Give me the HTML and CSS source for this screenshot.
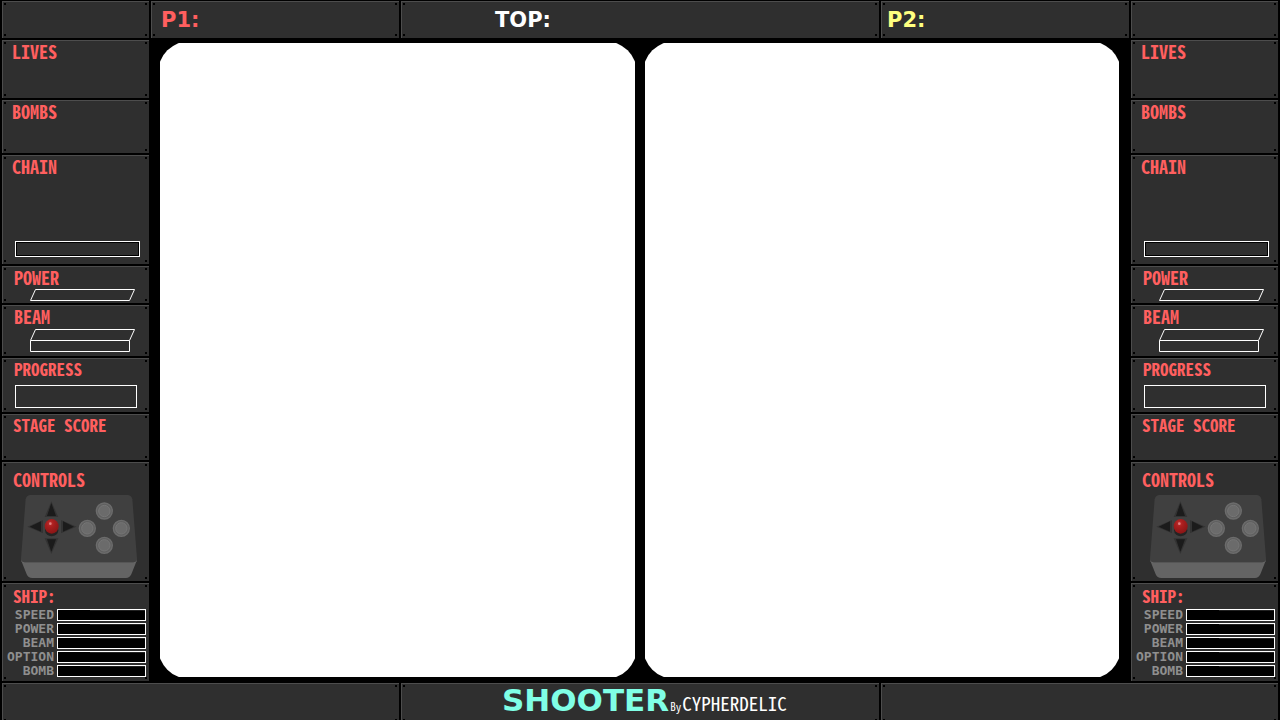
FILE: index.html
```html
<!DOCTYPE html>
<html lang="en">
<head>
<meta charset="utf-8">
<title>Shooter</title>
<link rel="stylesheet" href="styles.css">
</head>
<body>
<svg class="defs" aria-hidden="true">
  <defs>
    <radialGradient id="ball" cx="0.4" cy="0.3" r="0.75">
      <stop offset="0" stop-color="#c02e2e"/><stop offset="0.35" stop-color="#a81e1e"/><stop offset="1" stop-color="#861515"/>
    </radialGradient>
    <symbol id="stick" viewBox="63 269 348 249">
      <path d="M90 269H384Q394 270 397 282L411 460V470H63V460L77 282Q80 270 90 269Z" fill="#404040"/>
      <path d="M63 464Q66 471 74 471H400Q408 471 411 464L394 507Q389 518 378 518H97Q84 518 80 507Z" fill="#646464"/>
      <g fill="#333"><path d="M154 288L175 335H134Z"/><path d="M154 446L175 399H134Z"/><path d="M82 364L129 344V384Z"/><path d="M230 364L183 344V384Z"/></g>
      <g fill="#1b1b1b"><path d="M154 293L168 332H141Z"/><path d="M154 439L168 402H141Z"/><path d="M89 364L123 348V379Z"/><path d="M222 364L189 348V379Z"/></g>
      <ellipse cx="155" cy="375" rx="20" ry="18" fill="#242424"/>
      <ellipse cx="155" cy="363" rx="21" ry="22" fill="url(#ball)"/>
      <circle cx="151" cy="355" r="4" fill="#e08080"/>
      <g fill="#606060" stroke="#6c6c6c" stroke-width="4">
        <circle cx="313" cy="317" r="24"/><circle cx="262" cy="369" r="24"/><circle cx="364" cy="369" r="24"/><circle cx="313" cy="420" r="24"/>
      </g>
      <g fill="#6b6b6b" stroke="#767676" stroke-width="3">
        <circle cx="313" cy="317" r="17"/><circle cx="262" cy="369" r="17"/><circle cx="364" cy="369" r="17"/><circle cx="313" cy="420" r="17"/>
      </g>
    </symbol>
    <symbol id="power" viewBox="0 0 105 12">
      <path d="M5.500 .5H104.500L99.500 11.500H.5Z" fill="none" stroke="#fff"/>
    </symbol>
    <symbol id="beam" viewBox="0 0 105 23">
      <path d="M5.500 .5H104.500L99.500 11.500H.5ZM.5 11.500V22.500H99.500V11.500" fill="none" stroke="#fff"/>
    </symbol>
  </defs>
</svg>
<div class="cabinet">
  <header class="top-bar">
    <div class="panel"></div>
    <div class="panel score score-p1">P1:</div>
    <div class="panel score score-top">TOP:</div>
    <div class="panel score score-p2">P2:</div>
    <div class="panel"></div>
  </header>
  <main class="stage">
    <aside class="side">
      <section class="panel"><h2>LIVES</h2></section>
      <section class="panel"><h2>BOMBS</h2></section>
      <section class="panel chain"><h2>CHAIN</h2><div class="chain-meter"></div></section>
      <section class="panel inset"><h2>POWER</h2><svg class="power"><use href="#power"/></svg></section>
      <section class="panel inset"><h2>BEAM</h2><svg class="beam"><use href="#beam"/></svg></section>
      <section class="panel inset"><h2 class="long">PROGRESS</h2><div class="progress"></div></section>
      <section class="panel stage-score"><h2 class="long">STAGE SCORE</h2></section>
      <section class="panel controls"><h2>CONTROLS</h2><svg class="stick"><use href="#stick"/></svg></section>
      <section class="panel ship"><h2>SHIP:</h2>
        <dl class="stats">
          <dt>SPEED</dt><dd></dd>
          <dt>POWER</dt><dd></dd>
          <dt>BEAM</dt><dd></dd>
          <dt>OPTION</dt><dd></dd>
          <dt>BOMB</dt><dd></dd>
        </dl>
      </section>
    </aside>
    <div class="screens">
      <div class="screen"><div class="glass"></div></div>
      <div class="screen"><div class="glass"></div></div>
    </div>
    <aside class="side">
      <section class="panel"><h2>LIVES</h2></section>
      <section class="panel"><h2>BOMBS</h2></section>
      <section class="panel chain"><h2>CHAIN</h2><div class="chain-meter"></div></section>
      <section class="panel inset"><h2>POWER</h2><svg class="power"><use href="#power"/></svg></section>
      <section class="panel inset"><h2>BEAM</h2><svg class="beam"><use href="#beam"/></svg></section>
      <section class="panel inset"><h2 class="long">PROGRESS</h2><div class="progress"></div></section>
      <section class="panel stage-score"><h2 class="long">STAGE SCORE</h2></section>
      <section class="panel controls"><h2>CONTROLS</h2><svg class="stick"><use href="#stick"/></svg></section>
      <section class="panel ship"><h2>SHIP:</h2>
        <dl class="stats">
          <dt>SPEED</dt><dd></dd>
          <dt>POWER</dt><dd></dd>
          <dt>BEAM</dt><dd></dd>
          <dt>OPTION</dt><dd></dd>
          <dt>BOMB</dt><dd></dd>
        </dl>
      </section>
    </aside>
  </main>
  <footer class="bottom-bar">
    <div class="panel"></div>
    <div class="panel credits">
      <h1>SHOOTER</h1><span class="by">By</span><span class="author">CYPHERDELIC</span>
    </div>
    <div class="panel"></div>
  </footer>
</div>
</body>
</html>
```
FILE: styles.css
```css
* { box-sizing: border-box; }

body {
  margin: 0;
  background: #000;
  color: #ff5f5f;
  font-family: "Noto Sans Mono CJK JP", "Liberation Mono", monospace;
}

h1, h2, dl, dt, dd { margin: 0; }
svg { display: block; }

.defs { position: absolute; width: 0; height: 0; }

.cabinet {
  display: grid;
  grid-template-rows: 37px 1fr 34px;
  gap: 2px;
  min-height: 100vh;
  padding: 1px 2px 3px;
}

.panel {
  border-top: 1px solid #4d4d4d;
  border-left: 1px solid #4d4d4d;
  background:
    linear-gradient(#000, #000) left 1px top 1px / 2px 2px no-repeat,
    linear-gradient(#000, #000) right 2px top 1px / 2px 2px no-repeat,
    linear-gradient(#000, #000) left 1px bottom 2px / 2px 2px no-repeat,
    linear-gradient(#000, #000) right 2px bottom 2px / 2px 2px no-repeat,
    #2f2f2f;
}

.top-bar {
  display: grid;
  grid-template-columns: 147px 1fr 478px 1fr 147px;
  gap: 2px;
}

.score {
  padding-left: 9px;
  font: bold 21px/36px "DejaVu Sans", sans-serif;
}
.score-top { padding-left: 93px; color: #fff; }
.score-p2 { padding-left: 5px; color: #ffff80; }

.stage {
  display: grid;
  grid-template-columns: 147px 1fr 147px;
}

.side {
  display: grid;
  grid-template-rows: 58fr 53fr 109fr 37fr 51fr 54fr 46fr 119fr 98fr;
  gap: 2px;
}
.side .panel {
  display: flex;
  flex-direction: column;
  padding: 0 2px 0 9px;
}
.side .inset { padding-left: 11px; }
.side .stage-score { padding-left: 10px; }
.side .chain { justify-content: space-between; padding-bottom: 7px; }
.side .controls { padding: 6px 2px 0 10px; }
.side .ship { padding: 2px 3px 0; }
.ship h2 { padding-left: 7px; font-size: 17px; }

h2 {
  font-size: 18px;
  font-weight: bold;
  line-height: 20px;
  white-space: nowrap;
}
.long { font-size: 17px; }

.chain-meter {
  height: 16px;
  margin: 0 7px 0 3px;
  border: 1px solid #fff;
  box-shadow: inset 0 0 0 1px #000;
}
.power { width: 105px; height: 12px; margin: 2px 0 0 16px; }
.beam { width: 105px; height: 23px; margin: 3px 0 0 16px; }
.progress {
  height: 23px;
  margin: 6px 10px 0 1px;
  border: 1px solid #fff;
}
.stick { width: 116px; height: 83px; margin: 6px 0 0 8px; }

.stats {
  display: grid;
  grid-template-columns: 48px 1fr;
  gap: 2px 3px;
  padding-top: 3px;
  color: #8f8f8f;
  font: bold 13px/12px "DejaVu Sans Mono", monospace;
}
.stats dt { text-align: right; }
.stats dd { border: 1px solid #fff; background: linear-gradient(#222, #222) right top / 55px 1px no-repeat #000; }

.screens {
  display: grid;
  grid-template-columns: 1fr 1fr;
  gap: 10px;
  padding: 3px 12px 4px 11px;
}
.screen { display: grid; overflow: hidden; }
.glass { margin: -2px; border-radius: 32px; background: #fff; }

.bottom-bar {
  display: grid;
  grid-template-columns: 1fr 478px 1fr;
  gap: 2px;
}
.credits {
  display: flex;
  align-items: baseline;
  padding-left: 100px;
  color: #fff;
  line-height: 33px;
}
.credits h1 {
  color: #80ffe6;
  font: bold 31px/33px "DejaVu Sans", sans-serif;
}
.by { padding: 0 1px; font-size: 11px; }
.author { font-size: 19px; }
```
